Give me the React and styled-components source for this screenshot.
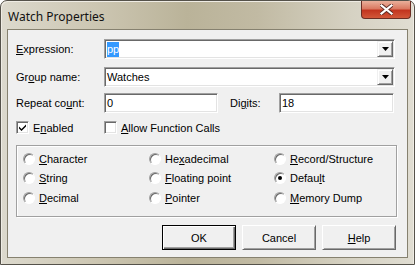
import React from "react";
import styled, { createGlobalStyle } from "styled-components";

const Global = createGlobalStyle`
  html, body {
    margin: 0;
    padding: 0;
    overflow: hidden;
    background: #ffffff;
  }
`;

const Frame = styled.div`
  width: 415px;
  height: 265px;
  box-sizing: border-box;
  border: 1px solid #55524a;
  border-radius: 7px 7px 0 0;
  background: linear-gradient(90deg, #dcd9cd 0%, #cdc7b3 22%, #bab399 45%, #c1baa3 62%, #d6d2c3 85%, #e0ddd2 100%);
  box-shadow: inset 1px 1px 0 #efece4, inset -1px 0 0 #efece4;
  display: flex;
  flex-direction: column;
  padding: 0 6px 6px;
  font-family: "Liberation Sans", Arial, sans-serif;
  font-size: 11px;
  color: #000;
`;

const TitleBar = styled.div`
  height: 28px;
  display: flex;
  justify-content: space-between;
  align-items: flex-start;
`;

const Title = styled.div`
  font-family: "Noto Sans", "Liberation Sans", sans-serif;
  font-size: 12px;
  padding: 7px 0 0 1px;
  color: #111;
`;

const Close = styled.div`
  width: 50px;
  height: 18px;
  margin-right: -3px;
  box-sizing: border-box;
  border: 1px solid #6b2e24;
  border-top: none;
  border-radius: 0 0 4px 4px;
  background: linear-gradient(180deg, #eab09b 0%, #da7a62 45%, #c2351f 55%, #d25739 100%);
  display: flex;
  align-items: center;
  justify-content: center;
`;

const Client = styled.div`
  flex: 1;
  background: #f0f0f0;
  border: 1px solid #86816f;
  padding: 9px 0 0 8px;
  display: flex;
  flex-direction: column;
`;

const Row = styled.div`
  display: flex;
  align-items: center;
  height: ${(p) => p.$h || 20}px;
  margin-top: ${(p) => p.$mt || 0}px;
`;

const Label = styled.span`
  width: ${(p) => p.$w}px;
  margin-left: ${(p) => p.$ml || 0}px;
  flex: none;
  white-space: nowrap;
`;

const Key = styled.u`
  text-decoration: underline;
  text-underline-offset: 1px;
`;

const Sunken = styled.div`
  width: ${(p) => p.$w}px;
  height: 20px;
  box-sizing: border-box;
  flex: none;
  background: #fff;
  border-style: solid;
  border-width: 1px;
  border-color: #a0a0a0 #ffffff #ffffff #a0a0a0;
  box-shadow: inset 1px 1px 0 #696969, inset -1px -1px 0 #e3e3e3;
  display: flex;
  align-items: center;
  padding-left: 2px;
`;

const Selected = styled.span`
  background: #3399ff;
  color: #fff;
  padding: 1px 0 2px;
`;

const Field = styled.span`
  flex: 1;
  line-height: 14px;
`;

const DropButton = styled.div`
  width: 16px;
  height: 16px;
  margin-right: 1px;
  box-sizing: border-box;
  background: #f0f0f0;
  border-style: solid;
  border-width: 1px;
  border-color: #f0f0f0 #696969 #696969 #f0f0f0;
  box-shadow: inset 1px 1px 0 #ffffff, inset -1px -1px 0 #a0a0a0;
  display: flex;
  align-items: center;
  justify-content: center;
`;

const CheckItem = styled.div`
  display: flex;
  align-items: center;
  width: ${(p) => p.$w || "auto"}px;
  flex: none;
`;

const CheckBox = styled.div`
  width: 13px;
  height: 13px;
  box-sizing: border-box;
  background: #fff;
  border-style: solid;
  border-width: 1px;
  border-color: #a0a0a0 #ffffff #ffffff #a0a0a0;
  box-shadow: inset 1px 1px 0 #696969, inset -1px -1px 0 #e3e3e3;
  margin-right: 4px;
  display: flex;
  align-items: center;
  justify-content: center;
`;

const Group = styled.div`
  width: 381px;
  height: 72px;
  box-sizing: border-box;
  margin-top: 11px;
  border: 1px solid #a0a0a0;
  box-shadow: inset 1px 1px 0 #ffffff, 1px 1px 0 #ffffff;
  padding: 3px 0 0 6px;
  display: grid;
  grid-template-columns: 126px 125px auto;
  grid-auto-rows: 19.5px;
`;

const RadioItem = styled.div`
  display: flex;
  align-items: center;
`;

const Radio = styled.div`
  width: 12px;
  height: 12px;
  box-sizing: border-box;
  border-radius: 50%;
  background: #fff;
  border: 1px solid;
  border-color: #a0a0a0 #ffffff #ffffff #a0a0a0;
  box-shadow: inset 1px 1px 0 #696969;
  margin-right: 4px;
  display: flex;
  align-items: center;
  justify-content: center;
`;

const Dot = styled.div`
  width: 4px;
  height: 4px;
  border-radius: 50%;
  background: #000;
`;

const Buttons = styled.div`
  display: flex;
  justify-content: flex-end;
  gap: 6px;
  margin-top: 8px;
  padding-right: 11px;
`;

const Button = styled.div`
  width: 74px;
  height: 25px;
  box-sizing: border-box;
  background: #f0f0f0;
  border: 1px solid;
  border-color: ${(p) => (p.$default ? "#000" : "#ffffff #696969 #696969 #ffffff")};
  box-shadow: ${(p) =>
    p.$default
      ? "inset 1px 1px 0 #ffffff, inset -1px -1px 0 #696969, inset -2px -2px 0 #a0a0a0"
      : "inset 1px 1px 0 #f0f0f0, inset -1px -1px 0 #a0a0a0"};
  display: flex;
  align-items: center;
  justify-content: center;
`;

function Arrow() {
  return (
    <svg width="7" height="4" viewBox="0 0 7 4">
      <path d="M0 0h7L3.5 4z" fill="#000" />
    </svg>
  );
}

function Combo({ width, children }) {
  return (
    <Sunken $w={width}>
      <Field>{children}</Field>
      <DropButton>
        <Arrow />
      </DropButton>
    </Sunken>
  );
}

function Option({ label, keyIndex, checked }) {
  const before = label.slice(0, keyIndex);
  const key = label[keyIndex];
  const after = label.slice(keyIndex + 1);
  return (
    <RadioItem>
      <Radio>{checked && <Dot />}</Radio>
      <span>
        {before}
        <Key>{key}</Key>
        {after}
      </span>
    </RadioItem>
  );
}

const options = [
  ["Character", 0],
  ["Hexadecimal", 2],
  ["Record/Structure", 0],
  ["String", 0],
  ["Floating point", 0],
  ["Default", 5, true],
  ["Decimal", 0],
  ["Pointer", 0],
  ["Memory Dump", 0],
];

export default function App() {
  return (
    <>
      <Global />
      <Frame>
        <TitleBar>
          <Title>Watch Properties</Title>
          <Close>
            <svg width="13" height="11" viewBox="0 0 13 11">
              <path
                d="M1.5 1.5L11.5 9.5M11.5 1.5L1.5 9.5"
                stroke="#5a2a22"
                strokeWidth="4"
                strokeLinecap="square"
              />
              <path
                d="M1.5 1.5L11.5 9.5M11.5 1.5L1.5 9.5"
                stroke="#ffffff"
                strokeWidth="2.2"
                strokeLinecap="square"
              />
            </svg>
          </Close>
        </TitleBar>
        <Client>
          <Row>
            <Label $w={88}>
              <Key>E</Key>xpression:
            </Label>
            <Combo width={291}>
              <Selected>pp</Selected>
            </Combo>
          </Row>
          <Row $mt={8}>
            <Label $w={88}>
              Gr<Key>o</Key>up name:
            </Label>
            <Combo width={291}>Watches</Combo>
          </Row>
          <Row $mt={6}>
            <Label $w={88}>
              Repeat co<Key>u</Key>nt:
            </Label>
            <Sunken $w={114}>0</Sunken>
            <Label $w={49} $ml={12}>
              Di<Key>g</Key>its:
            </Label>
            <Sunken $w={115}>18</Sunken>
          </Row>
          <Row $mt={8} $h={13}>
            <CheckItem $w={88}>
              <CheckBox>
                <svg width="7" height="7" viewBox="0 0 7 7">
                  <path d="M0 2.5l2.5 2.5L7 0.5v2L2.5 7 0 4.5z" fill="#000" />
                </svg>
              </CheckBox>
              <span>
                E<Key>n</Key>abled
              </span>
            </CheckItem>
            <CheckItem>
              <CheckBox />
              <span>
                <Key>A</Key>llow Function Calls
              </span>
            </CheckItem>
          </Row>
          <Group>
            {options.map(([label, k, checked]) => (
              <Option key={label} label={label} keyIndex={k} checked={checked} />
            ))}
          </Group>
          <Buttons>
            <Button $default>OK</Button>
            <Button>Cancel</Button>
            <Button>
              <span>
                <Key>H</Key>elp
              </span>
            </Button>
          </Buttons>
        </Client>
      </Frame>
    </>
  );
}
